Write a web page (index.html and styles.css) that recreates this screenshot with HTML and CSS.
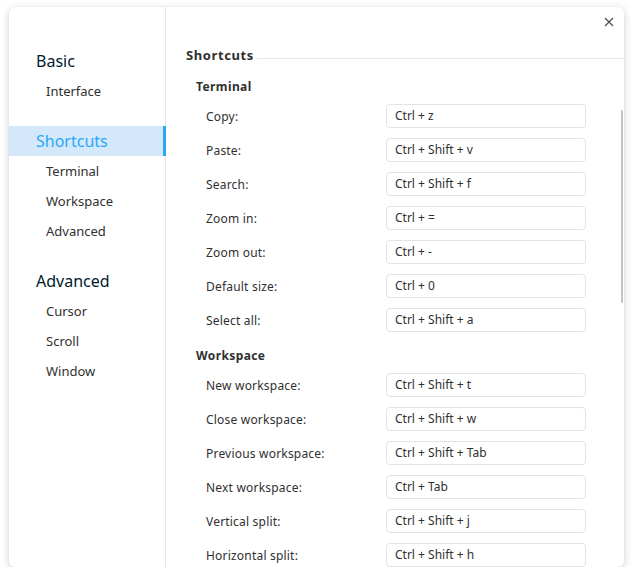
FILE: index.html
```html
<!DOCTYPE html>
<html>
<head>
<meta charset="utf-8">
<link rel="stylesheet" href="styles.css">
</head>
<body>
<div class="window">
  <nav class="sidebar">
    <div class="group">
      <div class="nav-head">Basic</div>
      <div class="nav-item">Interface</div>
    </div>
    <div class="group">
      <div class="nav-head active">Shortcuts</div>
      <div class="nav-item">Terminal</div>
      <div class="nav-item">Workspace</div>
      <div class="nav-item">Advanced</div>
    </div>
    <div class="group">
      <div class="nav-head">Advanced</div>
      <div class="nav-item">Cursor</div>
      <div class="nav-item">Scroll</div>
      <div class="nav-item">Window</div>
    </div>
  </nav>
  <main class="content">
    <div class="title"><span>Shortcuts</span></div>
    <div class="section-head">Terminal</div>
    <div class="row"><span class="label">Copy:</span><span class="key">Ctrl + z</span></div>
    <div class="row"><span class="label">Paste:</span><span class="key">Ctrl + Shift + v</span></div>
    <div class="row"><span class="label">Search:</span><span class="key">Ctrl + Shift + f</span></div>
    <div class="row"><span class="label">Zoom in:</span><span class="key">Ctrl + =</span></div>
    <div class="row"><span class="label">Zoom out:</span><span class="key">Ctrl + -</span></div>
    <div class="row"><span class="label">Default size:</span><span class="key">Ctrl + 0</span></div>
    <div class="row"><span class="label">Select all:</span><span class="key">Ctrl + Shift + a</span></div>
    <div class="section-head">Workspace</div>
    <div class="row"><span class="label">New workspace:</span><span class="key">Ctrl + Shift + t</span></div>
    <div class="row"><span class="label">Close workspace:</span><span class="key">Ctrl + Shift + w</span></div>
    <div class="row"><span class="label">Previous workspace:</span><span class="key">Ctrl + Shift + Tab</span></div>
    <div class="row"><span class="label">Next workspace:</span><span class="key">Ctrl + Tab</span></div>
    <div class="row"><span class="label">Vertical split:</span><span class="key">Ctrl + Shift + j</span></div>
    <div class="row"><span class="label">Horizontal split:</span><span class="key">Ctrl + Shift + h</span></div>
  </main>
  <div class="scrollbar"></div>
  <button class="close" aria-label="Close">
    <svg width="10" height="10" viewBox="0 0 10 10"><path d="M1 1 L9 9 M9 1 L1 9" stroke="#4a4a4a" stroke-width="1.1" fill="none"/></svg>
  </button>
</div>
</body>
</html>
```

FILE: styles.css
```css
* { box-sizing: border-box; }
html, body { margin: 0; padding: 0; background: #ffffff; }
body {
  font-family: "Noto Sans", "DejaVu Sans", sans-serif;
  padding: 7px 0 0 9px;
}
.window {
  position: relative;
  width: 615px;
  height: 560px;
  background: #ffffff;
  border-radius: 6px;
  box-shadow: 0 2px 8px rgba(0, 0, 0, 0.18), 0 0 1px rgba(0, 0, 0, 0.12);
  display: flex;
  overflow: hidden;
}
.sidebar {
  width: 157px;
  flex: none;
  border-right: 1px solid #e6e6e6;
  padding-top: 39px;
  display: flex;
  flex-direction: column;
  gap: 20px;
}
.nav-head {
  height: 30px;
  line-height: 30px;
  padding-left: 27px;
  font-size: 16px;
  color: #001a2e;
}
.nav-head.active {
  background: #d3e9fb;
  color: #2ca7f8;
  box-shadow: inset -3px 0 0 #2ca7f8;
  margin-right: -1px;
}
.nav-item {
  height: 30px;
  line-height: 30px;
  padding-left: 37px;
  font-size: 13px;
  color: #303030;
}
.content {
  flex: 1;
  padding: 34px 0 0 20px;
  min-width: 0;
}
.title {
  display: flex;
  align-items: center;
  height: 28px;
  font-size: 13px;
  font-weight: bold;
  letter-spacing: 0.6px;
  color: #303030;
}
.title::after {
  content: "";
  flex: 1;
  height: 1px;
  background: #e6e6e6;
  margin: 7px 0 0 3px;
}
.section-head {
  margin-top: 5px;
  padding-left: 10px;
  height: 25px;
  line-height: 25px;
  font-size: 12px;
  font-weight: bold;
  letter-spacing: 0.4px;
  color: #303030;
}
.row + .section-head { margin-top: 6px; }
.row {
  display: flex;
  align-items: center;
  height: 34px;
  padding-left: 20px;
}
.label {
  width: 180px;
  font-size: 12px;
  letter-spacing: 0.2px;
  color: #303030;
}
.key {
  width: 200px;
  height: 24px;
  line-height: 22px;
  border: 1px solid #e3e3e3;
  border-radius: 4px;
  padding-left: 8px;
  font-size: 12px;
  color: #303030;
}
.scrollbar {
  position: absolute;
  right: 1px;
  top: 103px;
  width: 2px;
  height: 193px;
  background: #c4c4c4;
  border-radius: 1px;
}
.close {
  position: absolute;
  top: 5px;
  right: 5px;
  width: 20px;
  height: 20px;
  border: none;
  background: transparent;
  padding: 0;
  display: flex;
  align-items: center;
  justify-content: center;
}
.close svg { display: block; }
```
